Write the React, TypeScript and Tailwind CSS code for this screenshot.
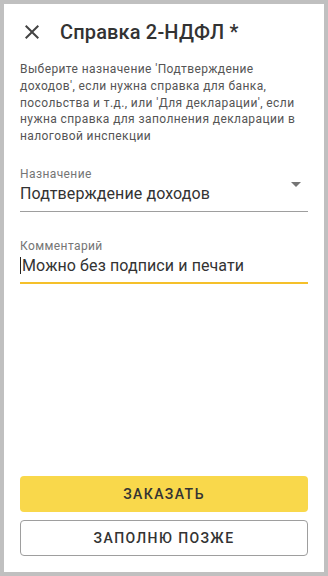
export default function App() {
  return (
    <div className="w-[328px] h-[576px] border-4 border-[#c0c0c0] bg-white flex flex-col px-4 font-['Roboto',sans-serif] text-[#333]">
      <div className="mt-4 h-6 flex items-center gap-4">
        <svg width="24" height="24" viewBox="0 0 24 24" className="shrink-0">
          <path
            d="M19 6.41 17.59 5 12 10.59 6.41 5 5 6.41 10.59 12 5 17.59 6.41 19 12 13.41 17.59 19 19 17.59 13.41 12z"
            fill="#444"
          />
        </svg>
        <h1 className="text-[20px] leading-6 font-medium tracking-[0.15px] text-[#333]">Справка 2-НДФЛ *</h1>
      </div>

      <p className="mt-[17px] text-[12px] leading-[16.8px] tracking-[0.4px] text-[#555]">
        Выберите назначение 'Подтверждение доходов', если нужна справка для банка,
        посольства и т.д., или 'Для декларации', если нужна справка для заполнения
        декларации в налоговой инспекции
      </p>

      <div className="mt-[21px] relative border-b border-[#9e9e9e] pb-[5px]">
        <div className="text-[12px] leading-4 tracking-[0.4px] text-[#757575]">Назначение</div>
        <div className="text-[16px] leading-6 tracking-[0.1px] text-[#333]">Подтверждение доходов</div>
        <svg width="24" height="24" viewBox="0 0 24 24" className="absolute right-0 top-[6px]">
          <path d="M7 10l5 5 5-5z" fill="#757575" />
        </svg>
      </div>

      <div className="mt-[26px] border-b-2 border-[#f5c02a] pb-1">
        <div className="text-[12px] leading-4 tracking-[0.4px] text-[#757575]">Комментарий</div>
        <div className="text-[16px] leading-6 tracking-[0.1px] text-[#333] flex items-center">
          <span className="w-px h-[17px] bg-[#222] mr-px" />
          Можно без подписи и печати
        </div>
      </div>

      <div className="mt-auto mb-4 flex flex-col gap-2">
        <button className="h-9 rounded bg-[#f9d84b] text-[14px] font-medium tracking-[1.4px] text-[#333]">
          ЗАКАЗАТЬ
        </button>
        <button className="h-9 rounded border border-[#9e9e9e] bg-white text-[14px] font-medium tracking-[1.4px] text-[#333]">
          ЗАПОЛНЮ ПОЗЖЕ
        </button>
      </div>
    </div>
  );
}
